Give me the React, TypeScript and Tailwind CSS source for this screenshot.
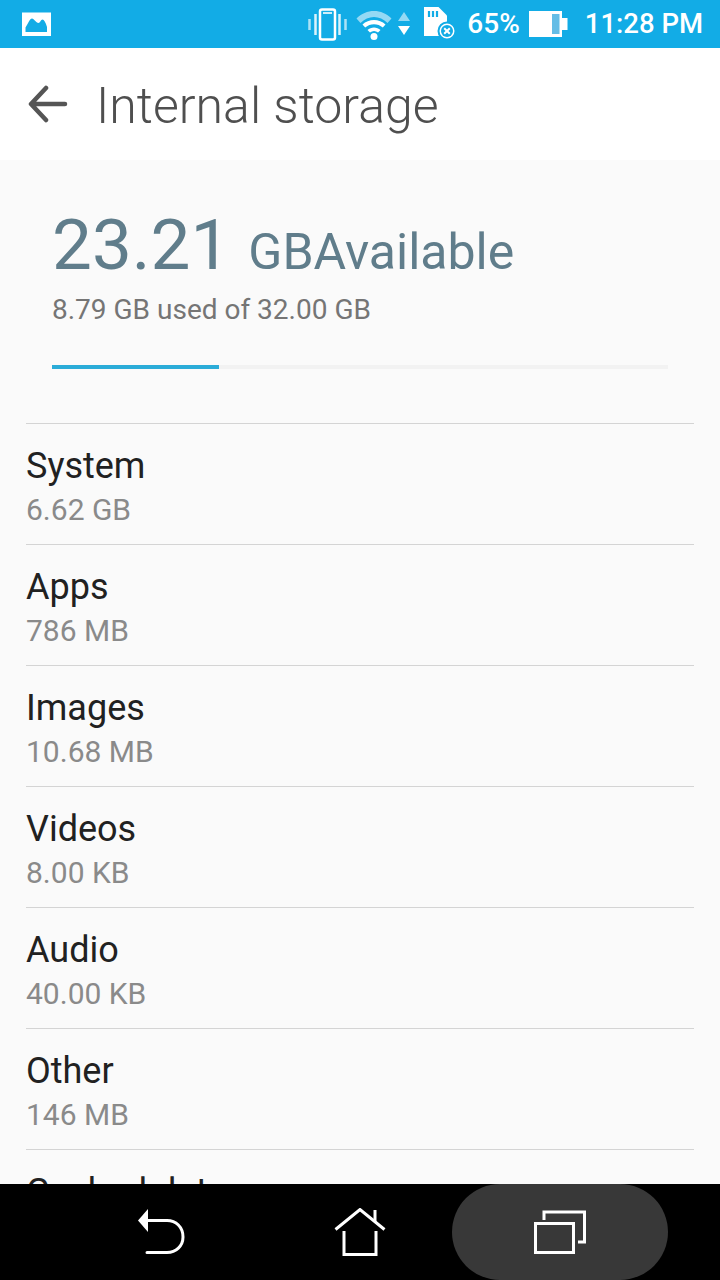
const rows = [
  { name: "System", size: "6.62 GB" },
  { name: "Apps", size: "786 MB" },
  { name: "Images", size: "10.68 MB" },
  { name: "Videos", size: "8.00 KB" },
  { name: "Audio", size: "40.00 KB" },
  { name: "Other", size: "146 MB" },
  { name: "Cached data", size: "51.20 MB" },
]

function StatusBar() {
  return (
    <div className="h-12 shrink-0 bg-[#12ace6] flex items-center text-white pl-[22px] pr-[17px]">
      {/* image notification */}
      <svg width="29" height="24" viewBox="0 0 29 24" className="shrink-0">
        <path fillRule="evenodd" fill="#fff" d="M0 0.5H29V24H0Z M3.500 15.500 L3.500 20 H25 V15 C23.500 10 22 7.500 20.500 7.500 C19 7.500 18 11 16.500 11 C14 11 12 6.500 10 6.500 C8 6.500 6 11.500 3.500 15.500Z" />
      </svg>
      <div className="flex-1" />
      {/* vibrate */}
      <svg width="39" height="33" viewBox="0 0 39 33" className="shrink-0">
        <rect x="12" y="1.500" width="15" height="30" rx="2" fill="none" stroke="#fff" strokeWidth="2.500" />
        <rect x="15" y="4" width="9" height="2" fill="#fff" opacity="0.8" />
        <path d="M7.500 6V27M31.500 6V27" stroke="#fff" strokeWidth="2.500" opacity="0.85" fill="none" />
        <path d="M1.500 11V22M37.500 11V22" stroke="#fff" strokeWidth="2.500" opacity="0.65" fill="none" />
      </svg>
      {/* wifi with arrows */}
      <svg width="36" height="32" viewBox="0 0 36 32" className="shrink-0 ml-[9px]">
        <path d="M0.500 10.500C10 0.500 26 0.500 35.500 10.500L31.500 15C24 7 12 7 4.500 15Z" fill="#fff" opacity="0.55" />
        <path d="M6.500 16.500C12.500 10.500 23.500 10.500 29.500 16.500L26.800 19.500C22 15 14 15 9.200 19.500Z" fill="#fff" />
        <path d="M11.500 22C15 18.500 21 18.500 24.500 22L22 24.500C19.500 22.500 16.500 22.500 14 24.500Z" fill="#fff" />
        <circle cx="18" cy="28.500" r="3.500" fill="#fff" />
      </svg>
      <svg width="12" height="26" viewBox="0 0 12 26" className="shrink-0 ml-[6px]">
        <path d="M6 1L12 10H0Z" fill="#fff" opacity="0.55" />
        <path d="M0 15H12L6 24Z" fill="#fff" />
      </svg>
      {/* sd card with x */}
      <svg width="35" height="34" viewBox="0 0 35 34" className="shrink-0 ml-[12px]">
        <path d="M2 0H16.500L25 8.500V29H2Z" fill="#fff" />
        <path d="M7 4V10M11 4V10M15 4V10" stroke="#12ace6" strokeWidth="2.200" />
        <circle cx="25" cy="24" r="8.500" fill="#fff" stroke="#12ace6" strokeWidth="2" />
        <circle cx="25" cy="24" r="6" fill="#12ace6" />
        <path d="M22.200 21.200L27.800 26.800M27.800 21.200L22.200 26.800" stroke="#fff" strokeWidth="2" />
      </svg>
      <span className="ml-[10px] text-[28px] leading-none font-medium">65%</span>
      {/* battery */}
      <svg width="39" height="26" viewBox="0 0 39 26" className="shrink-0 ml-[9px]">
        <path d="M0 0H33V7H38.500V19H33V26H0Z" fill="#fff" />
        <rect x="23" y="3" width="7.500" height="20" fill="#64bde6" />
      </svg>
      <span className="ml-[17px] text-[27.5px] leading-none font-medium">11:28 PM</span>
    </div>
  )
}

function NavBar() {
  return (
    <div className="h-24 shrink-0 bg-black flex px-[60px]">
      <div className="w-[200px] flex items-center justify-center">
        <svg width="50" height="48" viewBox="0 0 50 48" className="ml-[3px]">
          <path d="M1 12.500L11 1V24Z" fill="#fff" />
          <path d="M10 12.500H30C39 12.500 46 19 46 29C46 38 39 44.500 30 44.500H10" fill="none" stroke="#fff" strokeWidth="3" strokeLinecap="round" />
        </svg>
      </div>
      <div className="w-[200px] flex items-center justify-center">
        <svg width="52" height="48" viewBox="0 0 52 48">
          <path d="M1.500 21.500L26 1.500L50.500 21.500" fill="none" stroke="#fff" strokeWidth="3" />
          <path d="M10 23V46.500H42V23" fill="none" stroke="#fff" strokeWidth="3" />
          <path d="M41 2V14" fill="none" stroke="#fff" strokeWidth="3" />
        </svg>
      </div>
      <div className="w-[216px] -mx-2 bg-[#383838] rounded-[54px] flex items-center justify-center">
        <svg width="52" height="44" viewBox="0 0 52 44">
          <path d="M10 10V2H50.500V32H44" fill="none" stroke="#fff" strokeWidth="3" />
          <rect x="1.500" y="13.500" width="38" height="29" fill="none" stroke="#fff" strokeWidth="3" />
        </svg>
      </div>
    </div>
  )
}

export default function App() {
  return (
    <div className="w-[720px] h-[1280px] flex flex-col overflow-hidden bg-[#fafafa] font-['Roboto',sans-serif]">
      <StatusBar />
      <div className="h-28 shrink-0 bg-white flex items-center pl-7">
        <svg width="40" height="40" viewBox="0 0 40 40" className="shrink-0">
          <path d="M37 20H4M18 4L3 20L18 36" fill="none" stroke="#555555" strokeWidth="4.500" strokeLinecap="round" strokeLinejoin="round" />
        </svg>
        <h1 className="ml-[28px] mt-[3px] text-[50px] font-light text-[#4f4f4f] leading-none">Internal storage</h1>
      </div>
      <div className="flex-1 min-h-0 overflow-hidden px-[26px]">
        <div className="px-[26px] pt-[43px]">
          <div className="flex items-baseline text-[#607d8b] h-[84px]">
            <span className="text-[71px] leading-[84px]">23.21</span>
            <span className="ml-[18px] text-[50px] leading-none">GBAvailable</span>
          </div>
          <p className="text-[28px] leading-[34px] text-[#757575] mt-[6px]">8.79 GB used of 32.00 GB</p>
          <div className="mt-[38px] h-1 bg-[#f2f2f2]">
            <div className="h-full bg-[#2bacd8]" style={{ width: `${(167 / 616) * 100}%` }} />
          </div>
        </div>
        <ul className="mt-[54px]">
          {rows.map((row) => (
            <li key={row.name} className="border-t border-[#d4d4d4] h-[121px] pt-[22px]">
              <div className="text-[36px] leading-[40px] text-[#212121]">{row.name}</div>
              <div className="text-[30px] leading-[34px] text-[#8a8a8a] mt-[7px]">{row.size}</div>
            </li>
          ))}
        </ul>
      </div>
      <NavBar />
    </div>
  )
}
